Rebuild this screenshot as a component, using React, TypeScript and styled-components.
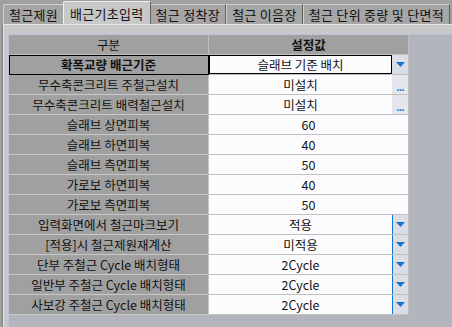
import { createGlobalStyle, styled } from 'styled-components'

const GlobalStyle = createGlobalStyle`
  html, body {
    margin: 0;
    padding: 0;
    background: #a0a0a0;
  }
  * { box-sizing: border-box; }
`

type Kind = 'text' | 'combo' | 'dots'

const tabs = ['철근제원', '배근기초입력', '철근 정착장', '철근 이음장', '철근 단위 중량 및 단면적']

const rows: { label: string; value: string; kind: Kind; focus?: boolean }[] = [
  { label: '확폭교량 배근기준', value: '슬래브 기준 배치', kind: 'combo', focus: true },
  { label: '무수축콘크리트 주철근설치', value: '미설치', kind: 'dots' },
  { label: '무수축콘크리트 배력철근설치', value: '미설치', kind: 'dots' },
  { label: '슬래브 상면피복', value: '60', kind: 'text' },
  { label: '슬래브 하면피복', value: '40', kind: 'text' },
  { label: '슬래브 측면피복', value: '50', kind: 'text' },
  { label: '가로보 하면피복', value: '40', kind: 'text' },
  { label: '가로보 측면피복', value: '50', kind: 'text' },
  { label: '입력화면에서 철근마크보기', value: '적용', kind: 'combo' },
  { label: '[적용]시 철근제원재계산', value: '미적용', kind: 'combo' },
  { label: '단부 주철근 Cycle 배치형태', value: '2Cycle', kind: 'combo' },
  { label: '일반부 주철근 Cycle 배치형태', value: '2Cycle', kind: 'combo' },
  { label: '사보강 주철근 Cycle 배치형태', value: '2Cycle', kind: 'combo' },
]

function App() {
  return (
    <>
      <GlobalStyle />
      <Window>
        <TabBar>
          {tabs.map((t, i) => (
            <Tab key={t} $active={i === 1}>{t}</Tab>
          ))}
        </TabBar>
        <Panel>
          <Grid>
            <HeadCell>구분</HeadCell>
            <HeadCell $bold>설정값</HeadCell>
            {rows.map((r) => (
              <Row key={r.label}>
                <LabelCell $focus={r.focus}>{r.label}</LabelCell>
                <ValueCell>
                  <ValueText $focus={r.focus}>{r.value}</ValueText>
                  {r.kind === 'combo' && (
                    <SideButton $line={!r.focus}>
                      <svg width="9" height="5" viewBox="0 0 9 5">
                        <path d="M0 0 H9 L4.5 5 Z" fill="#1a74cc" />
                      </svg>
                    </SideButton>
                  )}
                  {r.kind === 'dots' && <DotsButton>...</DotsButton>}
                </ValueCell>
              </Row>
            ))}
          </Grid>
        </Panel>
      </Window>
    </>
  )
}

const Window = styled.div`
  width: 452px;
  height: 327px;
  overflow: hidden;
  background: #a0a0a0;
  font-family: "Noto Sans CJK KR", "Noto Sans", sans-serif;
  font-size: 12px;
  color: #111;
  display: flex;
  flex-direction: column;
`

const TabBar = styled.div`
  display: flex;
  align-items: flex-end;
  height: 24px;
  padding-left: 3px;
  white-space: nowrap;
`

const Tab = styled.div<{ $active?: boolean }>`
  height: ${(p) => (p.$active ? '23px' : '20px')};
  padding: 0 ${(p) => (p.$active ? '6px' : '5px')};
  margin: ${(p) => (p.$active ? '0 -1px' : '0')};
  display: flex;
  align-items: center;
  background: ${(p) => (p.$active ? '#c8c8c8' : '#a6a6a6')};
  border-top: 1px solid ${(p) => (p.$active ? '#f0f0f0' : '#d0d0d0')};
  border-left: 1px solid ${(p) => (p.$active ? '#f0f0f0' : '#d0d0d0')};
  border-right: 1px solid #606060;
  border-radius: 2px 2px 0 0;
  position: relative;
  z-index: ${(p) => (p.$active ? 1 : 0)};
  font-size: 13px;
  letter-spacing: 0.3px;
`

const Panel = styled.div`
  flex: 1;
  background: #c8c8c8;
  border-left: 1px solid #808080;
  margin-left: 2px;
  padding: 10px 0 0 5px;
  box-shadow: inset 1px 1px 0 #e8e8e8;
`

const Grid = styled.div`
  height: 100%;
  background: #b2b5bc;
  border-top: 1px solid #b8c4dc;
  border-left: 1px solid #b8c4dc;
  display: grid;
  grid-template-columns: 200px 200px;
  grid-auto-rows: 20px;
  align-content: start;
`

const HeadCell = styled.div<{ $bold?: boolean }>`
  background: #a0a0a0;
  display: flex;
  align-items: center;
  justify-content: center;
  font-weight: ${(p) => (p.$bold ? 700 : 400)};
  border-right: 1px solid #c0c0c0;
  border-bottom: 1px solid #c0c0c0;
  font-size: 12.5px;
`

const Row = styled.div`
  display: contents;
`

const LabelCell = styled.div<{ $focus?: boolean }>`
  background: #a0a0a0;
  display: flex;
  align-items: center;
  justify-content: center;
  border-bottom: 1px solid #c8c8c8;
  border-right: 1px solid #c8c8c8;
  outline: ${(p) => (p.$focus ? '1px solid #000' : 'none')};
  outline-offset: -1px;
  font-weight: ${(p) => (p.$focus ? 700 : 400)};
  font-size: 12.5px;
  white-space: nowrap;
`

const ValueCell = styled.div`
  background: #fcfcff;
  display: flex;
  border-bottom: 1px solid #c0c0c0;
  border-right: 1px solid #c0c0c0;
`

const ValueText = styled.div<{ $focus?: boolean }>`
  flex: 1;
  display: flex;
  align-items: center;
  justify-content: center;
  border: 1px solid ${(p) => (p.$focus ? '#000' : 'transparent')};
  font-size: 12.5px;
`

const SideButton = styled.div<{ $line?: boolean }>`
  width: 16px;
  background: #dcdee6;
  border-left: 1px solid ${(p) => (p.$line ? '#1a74cc' : '#dcdee6')};
  display: flex;
  align-items: center;
  justify-content: center;
`

const DotsButton = styled.div`
  width: 16px;
  background: #e4e6ee;
  color: #1a74cc;
  font-family: "DejaVu Sans", sans-serif;
  font-weight: 700;
  font-size: 9px;
  letter-spacing: -1px;
  display: flex;
  align-items: flex-end;
  justify-content: center;
  line-height: 9px;
  padding-bottom: 1px;
`

export default App
